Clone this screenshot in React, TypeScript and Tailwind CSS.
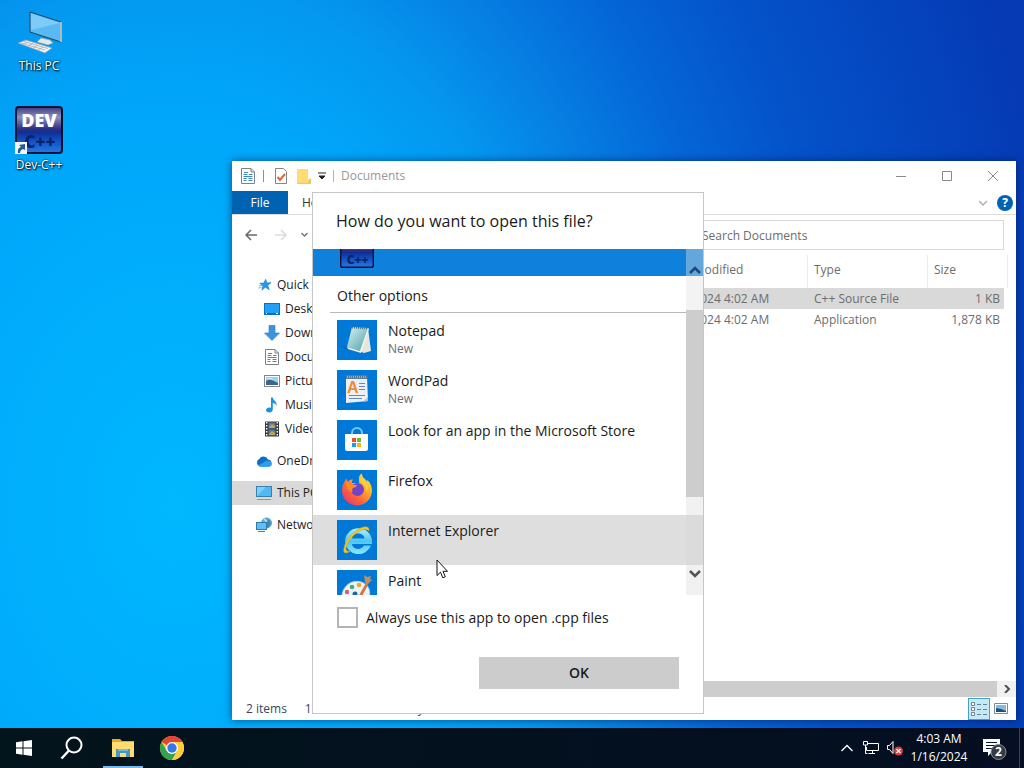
import React from "react";

const NAV_LINKS = [
  { label: "Quick access", icon: "star", className: "pl-[26px]" },
  { label: "Desktop", icon: "desktop", className: "pl-8" },
  { label: "Downloads", icon: "download", className: "pl-8" },
  { label: "Documents", icon: "document", className: "pl-8" },
  { label: "Pictures", icon: "picture", className: "pl-8" },
  { label: "Music", icon: "music", className: "pl-8" },
  { label: "Videos", icon: "video", className: "pl-8" },
  { label: "OneDrive", icon: "cloud", className: "mt-2 pl-6" },
  { label: "This PC", icon: "pc", className: "mt-2 pl-6 bg-[#d9d9d9]" },
  { label: "Network", icon: "network", className: "mt-2 pl-6" },
];

const FILES = [
  { date: "1/16/2024 4:02 AM", type: "C++ Source File", size: "1 KB", selected: true },
  { date: "1/16/2024 4:02 AM", type: "Application", size: "1,878 KB", selected: false },
];

const APPS = [
  { name: "Notepad", note: "New", icon: "notepad" },
  { name: "WordPad", note: "New", icon: "wordpad" },
  { name: "Look for an app in the Microsoft Store", icon: "store" },
  { name: "Firefox", icon: "firefox" },
  { name: "Internet Explorer", icon: "ie", hovered: true },
  { name: "Paint", icon: "paint" },
];

const DocumentIcon = ({ className }: { className?: string }) => (
  <svg className={className} viewBox="0 0 14 16" fill="none">
    <path d="M.5.5h9.5l3.5 3.5v11.5H.5z" fill="#fff" stroke="#7b8288" />
    <path d="M10 .5V4h3.5" stroke="#7b8288" />
    <path d="M3 4.500h4M2.500 6.500h4M8 6.500h3.500M2.500 8.500h9M2.500 10.500h3M7.500 10.500h4M2.500 12.500h3M7.500 12.500h4" stroke="#3c8cc4" />
  </svg>
);

const NavIcon = ({ name }: { name: string }) => {
  switch (name) {
    case "star":
      return (
        <svg className="w-[14px] h-[14px]" viewBox="0 0 16 16">
          <path d="M8.800 1.500l1.400 4.200 4.800-.4-3.900 3.100 1.700 4.900-4.300-2.700-4 3.200 1.100-5L2 6l4.700-.2z" fill="#2499e8" stroke="#1679c9" strokeWidth=".7" />
          <path d="M1 9l3.500-.5M.5 11.500l3.500-.8" stroke="#56b4f2" />
        </svg>
      );
    case "desktop":
      return (
        <svg className="w-4 h-4" viewBox="0 0 16 16">
          <rect x=".5" y="2.500" width="15" height="11" fill="#22a0f5" stroke="#0f70bd" />
          <path d="M1 12.500h14" stroke="#0b66ad" />
          <path d="M2 12.500h1M12 12.500h2" stroke="#fff" />
        </svg>
      );
    case "download":
      return (
        <svg className="w-4 h-4" viewBox="0 0 16 16">
          <path d="M5 .5h6V8h4.500L8 15.500.5 8H5z" fill="#3d94da" stroke="#2878bd" strokeWidth=".6" />
        </svg>
      );
    case "document":
      return <DocumentIcon className="w-4 h-4" />;
    case "picture":
      return (
        <svg className="w-4 h-4" viewBox="0 0 16 16">
          <rect x=".5" y="2.500" width="15" height="11" fill="#fff" stroke="#80868b" />
          <path d="M2 4h12v8H2z" fill="#9bd0f3" />
          <path d="M2 8l4-2 8 4v2H2z" fill="#3f6687" />
          <path d="M2 6l4-1 4 2z" fill="#eef8ff" />
        </svg>
      );
    case "music":
      return (
        <svg className="w-4 h-4" viewBox="0 0 16 16">
          <path d="M7 .5h1.800c.3 3 4.600 4 3.700 8.500-.7-2-2-2.700-3.700-3v6.500c0 2-1.800 3-3.600 3S2 14.500 2 13.300c0-2 2.500-3.300 5-2.500z" fill="#1793e0" />
        </svg>
      );
    case "video":
      return (
        <svg className="w-4 h-4" viewBox="0 0 16 16">
          <path d="M1 .5h14v15H1z" fill="#35383c" />
          <path d="M4.500 1.500h7v6h-7zM4.500 8.500h7v6h-7z" fill="#587aa6" />
          <path d="M5 6l3-3 3 2v2H5zM5 13l3-3 3 2v2H5z" fill="#c2a64d" />
          <path d="M2.700 1v14M13.300 1v14" stroke="#fff" strokeWidth="1.400" strokeDasharray="1.500 1.500" />
        </svg>
      );
    case "cloud":
      return (
        <svg className="w-4 h-4" viewBox="0 0 16 16">
          <path d="M4 13.500A4 4 0 013.200 6 5 5 0 0112 6.500a3.600 3.600 0 011 7z" fill="#0f6dc4" />
          <path d="M2 12.500l8-4.500c4-1 6 1 5.800 3.500-.2 1.500-1.500 2.200-3 2.200H4z" fill="#2b9fed" />
        </svg>
      );
    case "pc":
      return (
        <svg className="w-4 h-4" viewBox="0 0 16 16">
          <rect x=".5" y="1.500" width="15" height="10" fill="#4fb9f3" stroke="#3781ae" />
          <path d="M1 11l9-9H1z" fill="#7dcff8" />
          <path d="M1 14.500h14" stroke="#7c9bb0" />
        </svg>
      );
    default:
      return (
        <svg className="w-4 h-4" viewBox="0 0 16 16">
          <circle cx="10.500" cy="6" r="5" fill="#5baede" stroke="#5b9fc9" />
          <path d="M8 2q5 3 2 9" stroke="#b9e3fb" strokeWidth="1.500" fill="none" />
          <path d="M13 2q3 4 0 8l-2 1V5z" fill="#3c89bd" />
          <rect x=".5" y="5.500" width="10" height="7" fill="#5ec1f5" stroke="#2f79a8" />
          <path d="M2 14.500h7" stroke="#557f9c" />
        </svg>
      );
  }
};

const DevIcon = ({ className, id }: { className?: string; id: string }) => (
  <svg className={className} viewBox="0 0 48 48">
    <defs>
      <linearGradient id={id} x1="0" y1="0" x2="0" y2="1">
        <stop offset="0" stopColor="#3a3b80" />
        <stop offset=".22" stopColor="#8d90bd" />
        <stop offset=".48" stopColor="#2c2f80" />
        <stop offset=".55" stopColor="#0f2f96" />
        <stop offset=".75" stopColor="#1553c4" />
        <stop offset="1" stopColor="#2479e6" />
      </linearGradient>
    </defs>
    <rect x="1" y="1" width="46" height="46" rx="3" fill={`url(#${id})`} stroke="#0a1233" strokeWidth="2" />
    <text x="25" y="42" textAnchor="middle" fontSize="17" fontWeight="800" fill="#08256b" fontFamily="Open Sans, sans-serif">C++</text>
    <text x="24" y="21" textAnchor="middle" fontSize="18" fontWeight="800" fill="#fff" fontFamily="Open Sans, sans-serif">DEV</text>
  </svg>
);

const AppIcon = ({ name }: { name: string }) => {
  const box = "w-10 h-10 shrink-0 bg-[#0078d7]";
  switch (name) {
    case "notepad":
      return (
        <svg className={box} viewBox="0 0 40 40">
          <defs>
            <linearGradient id="pad" x1="0" y1="0" x2="1" y2="1">
              <stop offset="0" stopColor="#d8f3f1" />
              <stop offset="1" stopColor="#4c9eac" />
            </linearGradient>
          </defs>
          <path d="M4 26l8 1v3z" fill="#1562a7" />
          <path d="M31 8l3 23-7 2-5-2z" fill="#e6e6dc" />
          <path d="M15 7l16 1-8 23-13-4z" fill="url(#pad)" />
          <path d="M10 27l13 4 8-23 1 1-8 24-13-4z" fill="#f4f3e6" />
          <path d="M15 7.500l16 1" stroke="#567a81" strokeWidth="2" strokeDasharray="1 1" />
        </svg>
      );
    case "wordpad":
      return (
        <svg className={box} viewBox="0 0 40 40">
          <path d="M9 6h21l1 25-22 2z" fill="#eaf0f5" />
          <path d="M9 5h21v4H9z" fill="#587b9b" />
          <path d="M10 7h19" stroke="#bed6e9" strokeDasharray="1 1" />
          <text x="10" y="23" fontSize="16" fontWeight="700" fill="#ef8b2c" fontFamily="Liberation Sans, sans-serif">A</text>
          <path d="M22 13.500h6M22 16.500h6M22 19.500h6M12 25.500h16M12 28.500h13" stroke="#6987b8" />
          <path d="M26 32l5-5v4z" fill="#afbdc9" />
        </svg>
      );
    case "store":
      return (
        <svg className={box} viewBox="0 0 40 40">
          <path d="M15 15v-2a5 5 0 0110 0v2" fill="none" stroke="#71c9f8" strokeWidth="2" />
          <path d="M8 14h23v14.500q0 2.500-2.500 2.500h-18Q8 31 8 28.500z" fill="#fff" />
          <path d="M15 18h4v4h-4z" fill="#e7512c" />
          <path d="M20 18h4v4h-4z" fill="#79b72a" />
          <path d="M15 23h4v4h-4z" fill="#1c9de3" />
          <path d="M20 23h4v4h-4z" fill="#f8b719" />
        </svg>
      );
    case "firefox":
      return (
        <svg className={box} viewBox="0 0 40 40">
          <defs>
            <linearGradient id="fox" x1="1" y1="0" x2=".1" y2="1">
              <stop offset="0" stopColor="#fff44f" />
              <stop offset=".35" stopColor="#ffb12a" />
              <stop offset=".65" stopColor="#ff6739" />
              <stop offset="1" stopColor="#e92d72" />
            </linearGradient>
          </defs>
          <path d="M8 11c0-1 1-2 1.500-2.500 0 1.500.8 2.500 1.500 3 2-2 4-2 5-2-.8.7-1.200 2-1 3.500h7V8c0-2 1-3.500 3-4.500 0 3 1.500 4.500 4 6.500l1 1.500c.5 0 .5-1 0-2 3.500 3 5 7 5 11a15 15 0 01-30 0c0-3.700 1-7 3-9.500z" fill="url(#fox)" />
          <circle cx="20.500" cy="19.500" r="6.500" fill="#7444c5" />
          <path d="M9 13c4-1 6 .5 7 2h4c-.5 2-2 2.300-4 3-1 1-1 2-.3 3-1 2-3 1-4-1-2-2-3-4-2.700-7z" fill="#ff8a26" />
          <path d="M23 12c4 2 7 5 6 10 3-3 3-8-1-11l-4-4z" fill="#ffcf37" />
        </svg>
      );
    case "ie":
      return (
        <svg className={box} viewBox="0 0 40 40">
          <defs>
            <linearGradient id="blueE" x1="0" y1="0" x2="0" y2="1">
              <stop offset="0" stopColor="#b4effd" />
              <stop offset=".5" stopColor="#4cc5f3" />
              <stop offset="1" stopColor="#8be7fa" />
            </linearGradient>
          </defs>
          <path d="M27 25.500h7a13.500 13.500 0 01-26-3.500A13.500 13.500 0 0135 21.500v2.500H15c.8 6 9.500 6.500 12 1.500zM15 18.500h12.500c-.5-6-11.500-7-12.500 0z" fill="url(#blueE)" fillRule="evenodd" />
          <path d="M32 11c2-10-21-1-25 17-1.500 6 2 6 7 3-5 1-6-1-4-6C14 15 26 6 32 11z" fill="#efc92b" stroke="#ba9d24" strokeWidth=".5" />
        </svg>
      );
    default:
      return (
        <svg className={box} viewBox="0 0 40 40">
          <path d="M5 25C6 16 15 9 24 12c8 2 11 11 7 17-4 5-10 3-12 0-3-4-6 4-10 2-3-1-4-3-4-6z" fill="#eef3f6" stroke="#b8ccda" />
          <circle cx="10" cy="22" r="2.200" fill="#d76077" />
          <circle cx="15" cy="17" r="2.300" fill="#4fa873" />
          <circle cx="22" cy="15" r="2.300" fill="#efa62e" />
          <circle cx="18" cy="24" r="2.500" fill="#176aae" />
          <path d="M29 13l2 2-7 13-3-1z" fill="#d07845" />
          <path d="M27 5l3 2 4-1-1 3 2 1-5 5-2-3z" fill="#c18e62" />
        </svg>
      );
  }
};

const Explorer = () => {
  return (
    <section className="absolute left-[232px] right-2 top-[161px] bottom-2 flex flex-col bg-white text-xs text-[#6d6d6d] shadow-[0_0_8px_rgba(0,20,60,0.6)]">
      {/* TITLE BAR */}
      <header className="flex h-[30px] items-center pl-[9px]">
        <DocumentIcon className="w-[14px] h-4" />
        <span className="ml-2 h-3 w-px bg-[#909090]" />
        <svg className="ml-[11px] w-3 h-4" viewBox="0 0 12 16" fill="none">
          <path d="M.5.5h8l3 3v12H.5z" fill="#fff" stroke="#858585" />
          <path d="M2.500 9l2.500 3 5-6" stroke="#df6334" strokeWidth="2" />
        </svg>
        <svg className="ml-[10px] w-[14px] h-4" viewBox="0 0 14 16">
          <path d="M0 1h11v11h3v4H0z" fill="#ffdb72" />
          <path d="M11 12l3-2v6H0v-1h11z" fill="#efc857" />
        </svg>
        <svg className="ml-[7px] w-2 h-2" viewBox="0 0 8 8">
          <path d="M0 1h8M1 4h6L4 7z" stroke="#222" fill="#222" />
        </svg>
        <span className="ml-[7px] h-3 w-px bg-[#b0b0b0]" />
        <h1 className="ml-[7px] text-[#999]">Documents</h1>
        <div className="ml-auto flex">
          <button aria-label="Minimize" className="flex h-[30px] w-[46px] items-center justify-center">
            <svg className="w-[10px] h-[10px]" viewBox="0 0 10 10"><path d="M0 5.500h10" stroke="#8a8a8a" /></svg>
          </button>
          <button aria-label="Maximize" className="flex h-[30px] w-[46px] items-center justify-center">
            <svg className="w-[10px] h-[10px]" viewBox="0 0 10 10"><path d="M.5.5h9v9h-9z" fill="none" stroke="#8a8a8a" /></svg>
          </button>
          <button aria-label="Close" className="flex h-[30px] w-[46px] items-center justify-center">
            <svg className="w-[10px] h-[10px]" viewBox="0 0 10 10"><path d="M0 0l10 10M10 0L0 10" stroke="#8a8a8a" /></svg>
          </button>
        </div>
      </header>

      {/* RIBBON TABS */}
      <div className="flex h-6 items-center border-b border-[#dcdcdc]">
        <button className="h-[23px] w-14 bg-[#0063b1] text-white">File</button>
        <button className="px-3.5 text-[#333]">Home</button>
        <svg className="ml-auto mr-[10px] w-2 h-2" viewBox="0 0 8 8" fill="none">
          <path d="M0 2l4 4 4-4" stroke="#b0b0b0" strokeWidth="1.500" />
        </svg>
        <button aria-label="Help" className="mr-[3px] h-4 w-4 rounded-full bg-[#0063b1] text-xs leading-4 font-bold text-white">?</button>
      </div>

      {/* ADDRESS ROW */}
      <div className="flex h-10 items-center pl-[13px]">
        <button aria-label="Back">
          <svg className="w-3 h-3" viewBox="0 0 12 12" fill="none">
            <path d="M12 6H1M6 1L1 6l5 5" stroke="#666" strokeWidth="1.500" />
          </svg>
        </button>
        <button aria-label="Forward" className="ml-[18px]">
          <svg className="w-3 h-3" viewBox="0 0 12 12" fill="none">
            <path d="M0 6h11M6 1l5 5-5 5" stroke="#dadada" strokeWidth="1.500" />
          </svg>
        </button>
        <button aria-label="Recent locations" className="ml-[14px]">
          <svg className="w-[7px] h-[6px]" viewBox="0 0 7 6" fill="none">
            <path d="M.5 1l3 3 3-3" stroke="#777" strokeWidth="1.500" />
          </svg>
        </button>
        <input
          aria-label="Search Documents"
          placeholder="Search Documents"
          className="ml-auto mr-3 h-[30px] w-[330px] border border-[#d9d9d9] pl-[27px] outline-none placeholder:text-[#6d6d6d]"
        />
      </div>

      <div className="flex min-h-0 flex-1">
        <nav className="w-[188px] shrink-0 pt-[18px]">
          <ul>
            {NAV_LINKS.map((link) => (
              <li key={link.label} className={link.className}>
                <a href="#" className="flex h-6 items-center gap-[5px] text-[#222]">
                  <NavIcon name={link.icon} />
                  {link.label}
                </a>
              </li>
            ))}
          </ul>
        </nav>
        <div className="flex min-w-0 flex-1 flex-col">
          <table className="mr-2 table-fixed border-separate border-spacing-0 text-left">
            <thead>
              <tr className="h-[33px]">
                <th className="border-r border-[#ebebeb] pb-1 pl-1.5 font-normal">Name</th>
                <th className="w-[144px] border-r border-[#ebebeb] pb-1 font-normal">Date modified</th>
                <th className="w-[120px] border-r border-[#ebebeb] pb-1 pl-1.5 font-normal">Type</th>
                <th className="w-[80px] border-r border-[#ebebeb] pb-1 pl-1.5 font-normal">Size</th>
              </tr>
            </thead>
            <tbody>
              {FILES.map((file) => (
                <tr key={file.type} className={file.selected ? "h-[21px] bg-[#d9d9d9]" : "h-[21px]"}>
                  <td />
                  <td>{file.date}</td>
                  <td className="pl-1.5">{file.type}</td>
                  <td className="border-r-4 border-white pr-1 text-right">{file.size}</td>
                </tr>
              ))}
            </tbody>
          </table>
          <div className="mt-auto flex h-4 items-center bg-[#f1f1f1]">
            <div className="h-full flex-1 bg-[#cdcdcd]" />
            <button aria-label="Scroll right" className="flex w-[19px] justify-center">
              <svg className="w-2 h-2" viewBox="0 0 8 8" fill="none">
                <path d="M2 0l4 4-4 4" stroke="#505050" strokeWidth="2" />
              </svg>
            </button>
          </div>
        </div>
      </div>

      {/* STATUS BAR */}
      <footer className="flex h-[23px] items-center pl-[14px] text-[#33475f]">
        <span>2 items</span>
        <span className="ml-[18px]">1 item selected</span>
        <span className="ml-1">97 bytes</span>
        <button aria-label="Details view" className="ml-auto flex h-[22px] w-[22px] items-center justify-center border border-[#44a5c0] bg-[#c5eaf5]">
          <svg className="w-4 h-4" viewBox="0 0 16 16" fill="none">
            <path d="M.5 1.500h3v3h-3zM.5 6.500h3v3h-3zM.5 11.500h3v3h-3z" stroke="#77838b" fill="#fff" />
            <path d="M6 3.500h4M12 3.500h4M6 8.500h4M12 8.500h4M6 13.500h4M12 13.500h4" stroke="#66808f" />
          </svg>
        </button>
        <button aria-label="Large icons view" className="ml-1 mr-2">
          <svg className="w-[14px] h-[14px]" viewBox="0 0 14 14">
            <path d="M.5 1.500h13v10H.5z" fill="#fff" stroke="#7d8b94" />
            <path d="M2 3h10v7H2z" fill="#82b9e7" />
            <path d="M2 6l5 1 5 2v1H2z" fill="#205076" />
          </svg>
        </button>
      </footer>
    </section>
  );
};

const OpenWithDialog = () => {
  return (
    <section
      role="dialog"
      aria-labelledby="dialog-title"
      className="absolute left-[312px] top-[192px] w-[392px] border border-[#c6c6c6] bg-white text-[#1a1a1a]"
    >
      <h2 id="dialog-title" className="flex h-14 items-center pl-[23px] text-base">How do you want to open this file?</h2>
      <div className="relative h-[346px] overflow-hidden text-sm">
        <div className="flex h-[27px] items-end bg-[#0f81da] pb-2 pl-[27px]">
          <DevIcon id="devSmall" className="w-[34px] h-[34px]" />
        </div>
        <h3 className="ml-[17px] mr-[17px] flex h-[37px] items-center border-b border-[#b8b8b8] pt-1 pl-[7px]">Other options</h3>
        <ul className="pt-0.5">
          {APPS.map((app) => (
            <li key={app.name}>
              <button className={`flex h-[50px] w-full items-start gap-[11px] pt-[5px] pl-6 text-left ${app.hovered ? "bg-[#dedede]" : ""}`}>
                <AppIcon name={app.icon} />
                <span className="flex flex-col">
                  <span className="leading-[21px]">{app.name}</span>
                  {app.note && <span className="text-xs leading-4 text-[#6b6b6b]">{app.note}</span>}
                </span>
              </button>
            </li>
          ))}
        </ul>
        {/* SCROLLBAR */}
        <div className="absolute inset-y-0 right-0 flex w-[17px] flex-col">
          <div className="flex h-[61px] items-start justify-center bg-[#e0e0e0]/40 pt-[17px]">
            <svg className="w-3 h-2" viewBox="0 0 12 8" fill="none">
              <path d="M1 7l5-5 5 5" stroke="#174a78" strokeWidth="2.500" />
            </svg>
          </div>
          <div className="h-[187px] bg-[#cdcdcd]" />
          <div className="h-[18px] bg-[#f1f1f1]" />
          <div className="h-[50px] bg-[#d8d8d8]/50" />
          <div className="flex flex-1 items-start justify-center bg-[#f1f1f1] pt-[5px]">
            <svg className="w-3 h-2" viewBox="0 0 12 8" fill="none">
              <path d="M1 1l5 5 5-5" stroke="#555" strokeWidth="2.500" />
            </svg>
          </div>
        </div>
      </div>
      <label className="mt-3 ml-6 flex h-[21px] items-center gap-2 text-sm">
        <input type="checkbox" className="h-[21px] w-[21px] appearance-none border-2 border-[#b5b5b5] bg-white" />
        Always use this app to open .cpp files
      </label>
      <div className="mt-[29px] mb-6 mr-6 flex justify-end">
        <button className="h-8 w-[200px] bg-[#ccc] text-sm font-semibold">OK</button>
      </div>
    </section>
  );
};

const Taskbar = () => {
  return (
    <footer className="flex h-10 shrink-0 items-center bg-gradient-to-r from-[#02141c] to-[#050e22] text-white">
      <button aria-label="Start" className="flex w-12 justify-center">
        <svg className="w-4 h-4" viewBox="0 0 16 16" fill="#fff">
          <path d="M0 2.200L6.500 1.300v6.200H0zM7.500 1.200L16 0v7.500H7.500zM0 8.500h6.500v6.200L0 13.800zM7.500 8.500H16V16l-8.500-1.200z" />
        </svg>
      </button>
      <button aria-label="Search" className="flex w-12 justify-center">
        <svg className="w-6 h-6" viewBox="0 0 24 24" fill="none">
          <circle cx="14" cy="9" r="7.500" stroke="#fff" strokeWidth="2" />
          <path d="M9 14.500l-7.500 8" stroke="#fff" strokeWidth="2.500" />
        </svg>
      </button>
      <button aria-label="File Explorer" className="ml-[7px] flex h-10 w-10 items-center justify-center border-b-2 border-[#76b9ed] pt-0.5">
        <svg className="w-[22px] h-5" viewBox="0 0 22 20">
          <path d="M0 1h8l2 2h12v4H0z" fill="#e8a928" />
          <path d="M0 4h22v15H0z" fill="#ffdb70" />
          <path d="M4 19v-8h14v8h-4v-4H8v4z" fill="#4397c7" />
          <path d="M6 11h10v2H6z" fill="#72bce3" />
        </svg>
      </button>
      <button aria-label="Google Chrome" className="ml-[5px] flex w-12 justify-center">
        <svg className="w-6 h-6" viewBox="0 0 24 24">
          <circle cx="12" cy="12" r="12" fill="#ffce3c" />
          <path d="M12 12L1.600 6A12 12 0 0122.400 6z" fill="#e54335" />
          <path d="M1.600 6A12 12 0 0012 24l5.200-9L12 12 6.800 15z" fill="#32a350" />
          <path d="M12 6h10.400A12 12 0 0112 24l5.200-9z" fill="#ffce3c" />
          <circle cx="12" cy="12" r="6" fill="#fff" />
          <circle cx="12" cy="12" r="4.700" fill="#3478e5" />
        </svg>
      </button>

      {/* SYSTEM TRAY */}
      <div className="ml-auto flex items-center">
        <button aria-label="Show hidden icons">
          <svg className="w-3 h-2" viewBox="0 0 12 8" fill="none"><path d="M.5 7L6 1.500 11.500 7" stroke="#fff" strokeWidth="1.300" /></svg>
        </button>
        <svg className="ml-[10px] w-4 h-4" viewBox="0 0 16 16" fill="none">
          <path d="M5 3.500h10.500v7h-12V7M.5 1.500h4v3.500H.5zM2.500 5v8.500h2M9.500 10.500v3M5.500 13.500H12" stroke="#fff" />
        </svg>
        <svg className="ml-2 w-4 h-4" viewBox="0 0 16 16" fill="none">
          <path d="M.5 5.500h2l3.500-4v12l-3.500-4h-2z" stroke="#fff" />
          <circle cx="11.500" cy="11" r="4.500" fill="#d33e3e" />
          <path d="M9.500 9l4 4M13.500 9l-4 4" stroke="#fff" strokeWidth="1.300" />
        </svg>
        <time className="ml-[7px] w-[58px] text-center text-xs leading-[18px] whitespace-nowrap">
          4:03 AM
          <br />
          1/16/2024
        </time>
        <button aria-label="Notifications" className="ml-[15px] mr-3">
          <svg className="w-6 h-6" viewBox="0 0 24 24">
            <path d="M0 3h17v13H9l-4 4v-4H0z" fill="#fff" />
            <path d="M3 6.500h11M3 9.500h11M3 12.500h7" stroke="#07142a" />
            <circle cx="15.500" cy="16" r="7.500" fill="#333b47" stroke="#8a9099" />
            <text x="15.500" y="20" textAnchor="middle" fontSize="12" fontWeight="700" fill="#fff">2</text>
          </svg>
        </button>
        <span className="mr-1 h-10 w-px bg-[#3c4454]" />
      </div>
    </footer>
  );
};

const App = () => {
  return (
    <div className="flex h-screen flex-col overflow-hidden bg-[#053ab4] bg-[radial-gradient(1000px_1350px_at_17%_66%,#00b8ff_0%,#00a6fa_30%,#0498f0_39%,#067ee2_48%,#0466d7_57%,#0453ca_67%,#053ab4_90%)] font-['Open_Sans','Noto_Sans',sans-serif]">
      <main className="relative flex-1">
        <div className="flex w-[78px] flex-col items-center pt-2.5 text-xs text-white">
          <button className="flex flex-col items-center">
            <svg className="w-12 h-12" viewBox="0 0 48 48">
              <path d="M15 2l31 10v20L15 22z" fill="#58b9f3" stroke="#23435d" />
              <path d="M16 3.500l29 9.500L16 20z" fill="#7dcbf8" />
              <path d="M46 12v20" stroke="#d7d4c8" strokeWidth="1.500" />
              <path d="M26 28l9 2 3 3-5 2-11-3z" fill="#e5e8e9" stroke="#8c9ba6" strokeWidth=".5" />
              <path d="M3 33l8-3 26 8-7 5z" fill="#eef0f1" stroke="#92a2ad" strokeWidth=".7" />
              <path d="M6 33l24 7M9 31.500l24 7M13 32l-5 2M18 33l-5 3M23 35l-5 3M28 37l-5 3" stroke="#a7b1b9" strokeWidth=".8" />
            </svg>
            <span className="leading-4 [text-shadow:1px_1px_2px_#000,0_0_2px_#000]">This PC</span>
          </button>
          <button className="mt-8 flex flex-col items-center">
            <span className="relative">
              <DevIcon id="devBig" className="w-12 h-12" />
              <svg className="absolute bottom-0 left-0 w-3 h-3" viewBox="0 0 12 12">
                <path d="M0 0h12v12H0z" fill="#f5f6f8" />
                <path d="M3 11q-1-5 3-6L4 3l6-1v6L8 7q-3 1-3 4z" fill="#245aa0" />
              </svg>
            </span>
            <span className="mt-[3px] leading-4 [text-shadow:1px_1px_2px_#000,0_0_2px_#000]">Dev-C++</span>
          </button>
        </div>
        <Explorer />
        <OpenWithDialog />
        <svg className="absolute left-[436px] top-[559px] w-3 h-5" viewBox="0 0 12 20">
          <path d="M1 1v15.500l3.500-3.300 2.300 5.600 2.500-1-2.300-5.500h4.500z" fill="#fff" stroke="#111" />
        </svg>
      </main>
      <Taskbar />
    </div>
  );
};

export default App;
